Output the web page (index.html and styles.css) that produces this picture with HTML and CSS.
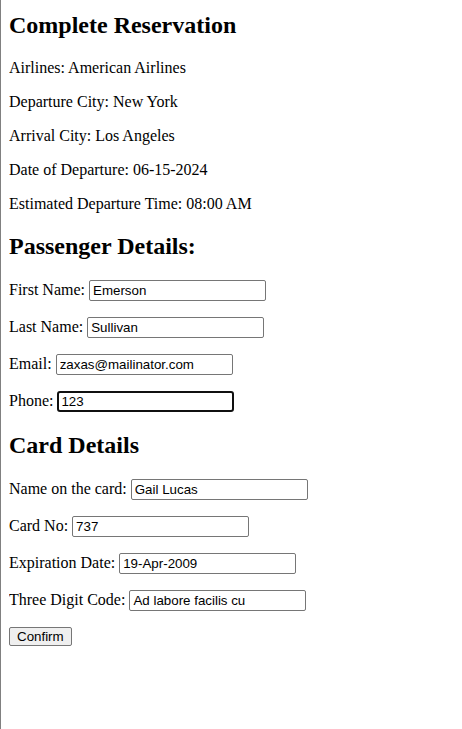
FILE: index.html
```html
<!DOCTYPE html>
<html lang="en">
<head>
<meta charset="utf-8">
<title>Complete Reservation</title>
<link rel="stylesheet" href="styles.css">
</head>
<body>
<h2 class="title">Complete Reservation</h2>
<p>Airlines: American Airlines</p>
<p>Departure City: New York</p>
<p>Arrival City: Los Angeles</p>
<p>Date of Departure: 06-15-2024</p>
<p>Estimated Departure Time: 08:00 AM</p>
<h2>Passenger Details:</h2>
<p>First Name: <input class="field" type="text" value="Emerson"></p>
<p>Last Name: <input class="field" type="text" value="Sullivan"></p>
<p>Email: <input class="field" type="text" value="zaxas@mailinator.com"></p>
<p>Phone: <input class="field focused" type="text" value="123"></p>
<h2>Card Details</h2>
<p>Name on the card: <input class="field" type="text" value="Gail Lucas"></p>
<p>Card No: <input class="field" type="text" value="737"></p>
<p>Expiration Date: <input class="field" type="text" value="19-Apr-2009"></p>
<p>Three Digit Code: <input class="field" type="text" value="Ad labore facilis cu"></p>
<button class="btn" type="button">Confirm</button>
</body>
</html>
```
FILE: styles.css
```css
html {
  min-height: 100%;
  border-left: 1px solid #808080;
  box-sizing: border-box;
}
body {
  margin: 8px;
  font-family: "Liberation Serif", "Times New Roman", serif;
  font-size: 16px;
  color: #000;
}
h2 {
  font-size: 24px;
  font-weight: bold;
  margin: 19.92px 0;
}
h2.title {
  margin-top: 4px;
}
p {
  margin: 16px 0;
}
.field {
  font-family: "Liberation Sans", Arial, sans-serif;
  font-size: 13.333px;
  line-height: 15px;
  border: 1px solid #767676;
  border-radius: 2px;
  padding: 2px 3px;
  width: 169px;
  color: #000;
  background: #fff;
}
.field.focused {
  border: 2px solid #101010;
  border-radius: 3px;
  padding: 1px 2px;
  outline: none;
}
.btn {
  font-family: "Liberation Sans", Arial, sans-serif;
  font-size: 13.333px;
  padding: 1px 7px;
  border: 1px solid #767676;
  border-radius: 2px;
  background: #efefef;
  color: #000;
}
```
